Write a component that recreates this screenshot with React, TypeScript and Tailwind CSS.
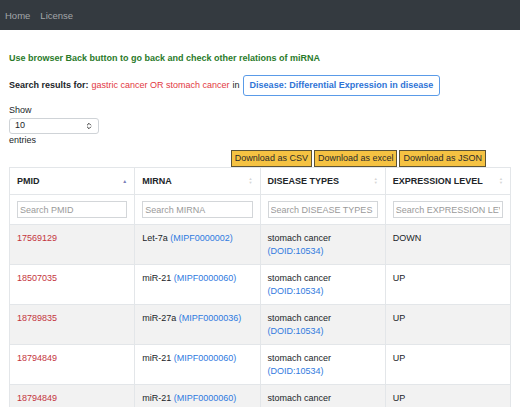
import { ChevronsUpDown } from "lucide-react";

type Row = {
  pmid: string;
  mirna: string;
  family: string;
  disease: string;
  doid: string;
  level: string;
};

const rows: Row[] = [
  { pmid: "17569129", mirna: "Let-7a", family: "MIPF0000002", disease: "stomach cancer", doid: "DOID:10534", level: "DOWN" },
  { pmid: "18507035", mirna: "miR-21", family: "MIPF0000060", disease: "stomach cancer", doid: "DOID:10534", level: "UP" },
  { pmid: "18789835", mirna: "miR-27a", family: "MIPF0000036", disease: "stomach cancer", doid: "DOID:10534", level: "UP" },
  { pmid: "18794849", mirna: "miR-21", family: "MIPF0000060", disease: "stomach cancer", doid: "DOID:10534", level: "UP" },
  { pmid: "18794849", mirna: "miR-21", family: "MIPF0000060", disease: "stomach cancer", doid: "DOID:10534", level: "UP" },
];

const columns = ["PMID", "MIRNA", "DISEASE TYPES", "EXPRESSION LEVEL"];

function SortIcon({ active }: { active?: boolean }) {
  if (active) {
    return <span className="text-[5px] leading-none text-[#7b7fb8]">▲</span>;
  }
  return (
    <span className="flex flex-col text-[4px] leading-[4px] text-[#d6d6d6]">
      <span>▲</span>
      <span>▼</span>
    </span>
  );
}

export default function App() {
  return (
    <div className="h-[407px] overflow-hidden bg-white font-['Liberation_Sans',Arial,sans-serif] text-[9px] leading-[13px] text-[#212529]">
      <nav className="flex h-[30px] items-center gap-[10px] bg-[#343a40] px-[5px] text-[9.5px] text-[#a3a6a9]">
        <span>Home</span>
        <span>License</span>
      </nav>

      <div className="px-[9px]">
        <p className="mt-[22px] font-bold text-[#2a7a2a]">
          Use browser Back button to go back and check other relations of miRNA
        </p>

        <div className="mt-[10px] flex items-center">
          <span className="font-bold">Search results for:</span>
          <span className="ml-[3px] text-[#e2383f]">gastric cancer OR stomach cancer</span>
          <span className="ml-[3px]">in</span>
          <button className="ml-[3px] h-[21px] rounded-[3px] border border-[#5a9be8] px-[6px] font-bold text-[#2f74d6]">
            Disease: Differential Expression in disease
          </button>
        </div>

        <div className="mt-[8px] leading-[13.5px]">
          <div>Show</div>
          <div className="flex h-[16px] w-[90px] items-center justify-between rounded-[3px] border border-[#cfd3d7] px-[5px]">
            <span>10</span>
            <ChevronsUpDown size={8} strokeWidth={3} className="text-[#333]" />
          </div>
          <div>entries</div>
        </div>

        <div className="mt-[3px] flex justify-end gap-[2px] pr-[25px]">
          {["Download as CSV", "Download as excel", "Download as JSON"].map((label) => (
            <button
              key={label}
              className="h-[17px] border border-[#5c5335] bg-[#f5c242] px-[3px] text-[9px] text-[#2b2b2b]"
            >
              {label}
            </button>
          ))}
        </div>

        <table className="w-full table-fixed border-collapse">
          <thead>
            <tr>
              {columns.map((col, i) => (
                <th
                  key={col}
                  className="border border-[#e3e6e9] px-[7px] py-[6.5px] text-left font-bold"
                >
                  <div className="flex items-center justify-between">
                    <span>{col}</span>
                    <SortIcon active={i === 0} />
                  </div>
                </th>
              ))}
            </tr>
            <tr>
              {columns.map((col) => (
                <th key={col} className="border border-[#e3e6e9] px-[7px] py-[6px] font-normal">
                  <input
                    readOnly
                    placeholder={`Search ${col}`}
                    className="block h-[17px] w-full border border-[#d3d6d9] px-[2px] text-[9px] placeholder:text-[#9a9a9a]"
                  />
                </th>
              ))}
            </tr>
          </thead>
          <tbody>
            {rows.map((r, i) => (
              <tr key={i} className={i % 2 === 0 ? "bg-[#f2f2f2]" : "bg-white"}>
                <td className="border border-[#e3e6e9] px-[7px] py-[6.5px] align-top text-[#c4343d]">
                  {r.pmid}
                </td>
                <td className="border border-[#e3e6e9] px-[7px] py-[6.5px] align-top">
                  {r.mirna} <span className="text-[#2f7ae0]">({r.family})</span>
                </td>
                <td className="border border-[#e3e6e9] px-[7px] py-[6.5px] align-top">
                  <div>{r.disease}</div>
                  <div className="text-[#2f7ae0]">({r.doid})</div>
                </td>
                <td className="border border-[#e3e6e9] px-[7px] py-[6.5px] align-top">{r.level}</td>
              </tr>
            ))}
          </tbody>
        </table>
      </div>
    </div>
  );
}
